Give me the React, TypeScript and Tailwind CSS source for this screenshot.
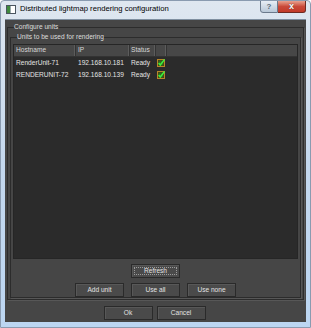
import React from 'react';

const font = "font-['Liberation_Sans',Arial,sans-serif]";

const Btn = ({ label, focus = false }: { label: string; focus?: boolean }) => (
    <div className="w-[49px] h-[14px] border border-[#2a2a2a] bg-[#4a4a4a] shadow-[inset_1px_1px_0_#585858] flex items-center justify-center relative">
        {focus && <div className="absolute inset-[2px] border border-dotted border-[#9a9a9a]"></div>}
        <span className="text-[6.6px] leading-none text-[#e2e2e2]">{label}</span>
    </div>
);

const Check = () => (
    <svg width="8" height="8" viewBox="0 0 8 8">
        <rect x="0.5" y="0.5" width="7" height="7" fill="#4c3a12" stroke="#b7862a" />
        <rect x="1.5" y="1.5" width="5" height="5" fill="#2f6a1c" />
        <path d="M1.6 4 L3.3 6 L7.6 0.4" stroke="#3cf03c" strokeWidth="1.5" fill="none" />
    </svg>
);

const units = [
    { host: 'RenderUnit-71', ip: '192.168.10.181', status: 'Ready' },
    { host: 'RENDERUNIT-72', ip: '192.168.10.139', status: 'Ready' },
];

export default function App() {
    return (
        <div className={`${font} w-[311px] h-[328px] flex flex-col bg-gradient-to-b from-[#dfe7f0] via-[#c4d8ee] to-[#bcd6f2] border border-[#8a9bb0] rounded-t-[4px] overflow-hidden`}>
            {/* Title bar */}
            <div className="h-[18px] flex items-start relative">
                <div className="mt-[4px] ml-[5px] w-[10px] h-[9px] border border-[#4a5560] bg-white flex">
                    <div className="w-[3px] h-full bg-[#3f8a3f]"></div>
                    <div className="flex-1 border-l border-[#9aa]"></div>
                </div>
                <span className="ml-[4px] mt-[3px] text-[7.7px] leading-[10px] text-black">Distributed lightmap rendering configuration</span>
                <div className="ml-auto mr-[4px] flex -mt-px">
                    <div className="w-[18px] h-[13px] border border-[#6b7a8c] rounded-bl-[3px] bg-gradient-to-b from-[#e8eef5] to-[#b9c8d8] flex items-center justify-center">
                        <span className="text-[8px] leading-none font-bold text-[#5a6878]">?</span>
                    </div>
                    <div className="w-[28px] h-[13px] border border-l-0 border-[#6e2a22] rounded-br-[3px] bg-gradient-to-b from-[#e8a190] via-[#c9493a] to-[#c23a28] flex items-center justify-center">
                        <span className="text-[9px] leading-none font-bold text-white [text-shadow:0_0_1px_#40201a]">x</span>
                    </div>
                </div>
            </div>

            {/* Client area */}
            <div className="ml-[4px] w-[301px] h-[303px] bg-[#464646] border-t border-[#7f8fa0] flex flex-col">
                <fieldset className="ml-[2px] mt-[3px] w-[297px] border border-[#2c2c2c] shadow-[1px_1px_0_#575757] px-[2px] pb-[1px]">
                    <legend className="ml-[4px] text-[6.6px] leading-[8px] text-[#dcdcdc]">Configure units</legend>
                    <fieldset className="mt-[2px] w-[291px] border border-[#2c2c2c] shadow-[1px_1px_0_#575757] px-[2px] flex flex-col items-center">
                        <legend className="ml-[4px] text-[6.6px] leading-[8px] text-[#dcdcdc]">Units to be used for rendering</legend>

                        {/* Table */}
                        <div className="mt-[3px] w-[285px] h-[215px] bg-[#2b2b2b] border border-[#262626] flex flex-col">
                            <div className="h-[12px] flex bg-[#474747] border-b border-[#333] text-[6.6px] leading-none text-[#d8d8d8]">
                                <div className="w-[62px] pl-[2px] flex items-center border-r border-[#333] shadow-[inset_-1px_0_0_#5c5c5c]">Hostname</div>
                                <div className="w-[54px] pl-[2px] flex items-center border-r border-[#333] shadow-[inset_-1px_0_0_#5c5c5c]">IP</div>
                                <div className="w-[26px] pl-[1px] flex items-center border-r border-[#333] shadow-[inset_-1px_0_0_#5c5c5c]">Status</div>
                                <div className="w-[11px] border-r border-[#333] shadow-[inset_-1px_0_0_#5c5c5c]"></div>
                                <div className="flex-1"></div>
                            </div>
                            {units.map((u) => (
                                <div key={u.host} className="h-[12px] flex items-center text-[6.6px] leading-none text-[#e4e4e4]">
                                    <div className="w-[62px] pl-[2px]">{u.host}</div>
                                    <div className="w-[54px] pl-[2px]">{u.ip}</div>
                                    <div className="w-[26px] pl-[1px]">{u.status}</div>
                                    <div className="w-[11px] pl-[1px] flex items-center"><Check /></div>
                                </div>
                            ))}
                        </div>

                        <div className="mt-[5px]">
                            <Btn label="Refresh" focus />
                        </div>
                        <div className="mt-[5px] flex gap-[7px]">
                            <Btn label="Add unit" />
                            <Btn label="Use all" />
                            <Btn label="Use none" />
                        </div>
                    </fieldset>
                </fieldset>

                <div className="mt-[6px] flex justify-center gap-[4px] pr-[2px]">
                    <Btn label="Ok" />
                    <Btn label="Cancel" />
                </div>
            </div>
        </div>
    );
}
